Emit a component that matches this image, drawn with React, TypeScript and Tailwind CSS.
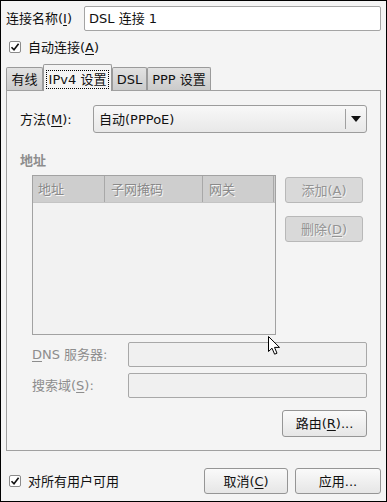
import React from "react";

const font = { fontFamily: '"DejaVu Sans", "Noto Sans CJK SC", sans-serif' };

function U({ c }: { c: string }) {
  return <span className="underline underline-offset-2">{c}</span>;
}

function Check() {
  return (
    <div className="w-[12px] h-[12px] border border-[#8a8a8a] bg-white rounded-[2px] flex items-center justify-center">
      <svg width="10" height="10" viewBox="0 0 10 10">
        <path d="M1.5 5.2 L4 7.8 L8.6 1.8" stroke="#111" strokeWidth="1.6" fill="none" />
      </svg>
    </div>
  );
}

function Tab({ w, children }: { w: string; children: React.ReactNode }) {
  return (
    <div
      className={`${w} h-[23px] border border-[#9a9a9a] border-b-0 rounded-t-[2px] bg-gradient-to-b from-[#e2e2e2] to-[#cbcbcb] flex items-center justify-center text-[13px] text-[#111]`}
    >
      {children}
    </div>
  );
}

export default function App() {
  return (
    <div
      className="relative w-[387px] h-[502px] border border-black bg-[#f4f4f4] text-[13px] text-[#111] leading-none"
      style={font}
    >
      <div className="pt-[5px] px-[5px]">
        {/* name row */}
        <div className="flex items-center h-[25px]">
          <div className="w-[78px]">
            连接名称(<U c="I" />)
          </div>
          <div className="flex-1 h-[25px] bg-white border border-[#a4a4a4] rounded-[2px] flex items-center pl-[4px]">
            DSL 连接 1
          </div>
        </div>
        {/* auto connect */}
        <div className="mt-[6px] h-[20px] flex items-center">
          <div className="ml-[3px]">
            <Check />
          </div>
          <div className="ml-[7px]">
            自动连接(<U c="A" />)
          </div>
        </div>
        {/* tabs */}
        <div className="mt-[7px] flex items-end h-[26px] relative z-10">
          <Tab w="w-[37px]">有线</Tab>
          <div className="w-[69px] h-[27px] -mb-[1px] border border-[#9a9a9a] border-b-0 rounded-t-[2px] bg-[#f4f4f4] flex items-start justify-center pt-[5px]">
            <div className="h-[19px] px-[2px] border border-dotted border-black flex items-center">
              IPv4 设置
            </div>
          </div>
          <Tab w="w-[35px]">DSL</Tab>
          <Tab w="w-[64px]">PPP 设置</Tab>
        </div>
        {/* panel */}
        <div className="h-[361px] border border-[#a0a0a0] pt-[14px] pl-[13px] pr-[13px]">
          <div className="flex items-center h-[28px]">
            <div className="w-[73px]">
              方法(<U c="M" />):
            </div>
            <div className="flex-1 h-[28px] border border-[#9c9c9c] rounded-[3px] bg-gradient-to-b from-[#f8f8f8] to-[#e8e8e8] flex items-center">
              <div className="flex-1 pl-[5px]">自动(PPPoE)</div>
              <div className="w-px h-[20px] bg-[#a0a0a0]" />
              <div className="w-[20px] flex items-center justify-center">
                <svg width="10" height="6" viewBox="0 0 10 6">
                  <path d="M0 0 H10 L5 6 Z" fill="#111" />
                </svg>
              </div>
            </div>
          </div>
          <div className="mt-[19px] h-[16px] flex items-center font-bold text-[#8d8d8d]">地址</div>
          <div className="mt-[7px] pl-[12px] flex">
            <div className="w-[244px] h-[160px] border border-[#a2a2a2] bg-[#f2f2f2] flex flex-col">
              <div className="h-[27px] bg-[#cecece] flex items-center text-[#8a8a8a] border-b border-[#c4c4c4]" style={{ textShadow: "1px 1px 0 #f6f6f6" }}>
                <div className="w-[72px] pl-[5px] h-full flex items-center border-r border-[#a8a8a8] box-border">地址</div>
                <div className="w-[98px] pl-[6px] h-full flex items-center border-r border-[#a8a8a8]">子网掩码</div>
                <div className="w-[71px] pl-[6px] h-full flex items-center border-r border-[#a8a8a8]">网关</div>
              </div>
            </div>
            <div className="ml-[9px] pt-[2px] flex flex-col gap-[13px]">
              <div className="w-[78px] h-[26px] rounded-[3px] border border-[#b8b8b8] bg-[#d9d9d9] flex items-center justify-center text-[#949494]" style={{ textShadow: "1px 1px 0 #f2f2f2" }}>
                添加(<U c="A" />)
              </div>
              <div className="w-[78px] h-[26px] rounded-[3px] border border-[#b8b8b8] bg-[#d9d9d9] flex items-center justify-center text-[#949494]" style={{ textShadow: "1px 1px 0 #f2f2f2" }}>
                删除(<U c="D" />)
              </div>
            </div>
          </div>
          <div className="mt-[7px] pl-[12px] flex items-center h-[25px]">
            <div className="w-[96px] text-[#8d8d8d]">
              <U c="D" />NS 服务器:
            </div>
            <div className="w-[239px] h-[25px] border border-[#a8a8a8] rounded-[2px] bg-[#f0f0f0]" />
          </div>
          <div className="mt-[6px] pl-[12px] flex items-center h-[25px]">
            <div className="w-[96px] text-[#8d8d8d]">
              搜索域(<U c="S" />):
            </div>
            <div className="w-[239px] h-[25px] border border-[#a8a8a8] rounded-[2px] bg-[#f0f0f0]" />
          </div>
          <div className="mt-[12px] flex justify-end">
            <div className="w-[85px] h-[27px] rounded-[3px] border border-[#959595] bg-gradient-to-b from-[#fafafa] to-[#e6e6e6] flex items-center justify-center">
              路由(<U c="R" />)...
            </div>
          </div>
        </div>
        {/* bottom */}
        <div className="mt-[17px] flex items-center h-[26px]">
          <div className="ml-[3px]">
            <Check />
          </div>
          <div className="ml-[7px] flex-1">对所有用户可用</div>
          <div className="w-[84px] h-[26px] rounded-[3px] border border-[#959595] bg-gradient-to-b from-[#fafafa] to-[#e6e6e6] flex items-center justify-center">
            取消(<U c="C" />)
          </div>
          <div className="ml-[7px] w-[86px] h-[26px] rounded-[3px] border border-[#959595] bg-gradient-to-b from-[#fafafa] to-[#e6e6e6] flex items-center justify-center">
            应用...
          </div>
        </div>
      </div>
      {/* mouse cursor */}
      <svg className="absolute left-[267px] top-[335px]" width="13" height="20" viewBox="0 0 13 20">
        <path d="M0.5 0.5 L0.5 15.5 L4 12.2 L6.6 18.2 L9 17.2 L6.5 11.4 L11.5 11.4 Z" fill="#fff" stroke="#000" strokeWidth="1" strokeLinejoin="round" />
      </svg>
    </div>
  );
}
